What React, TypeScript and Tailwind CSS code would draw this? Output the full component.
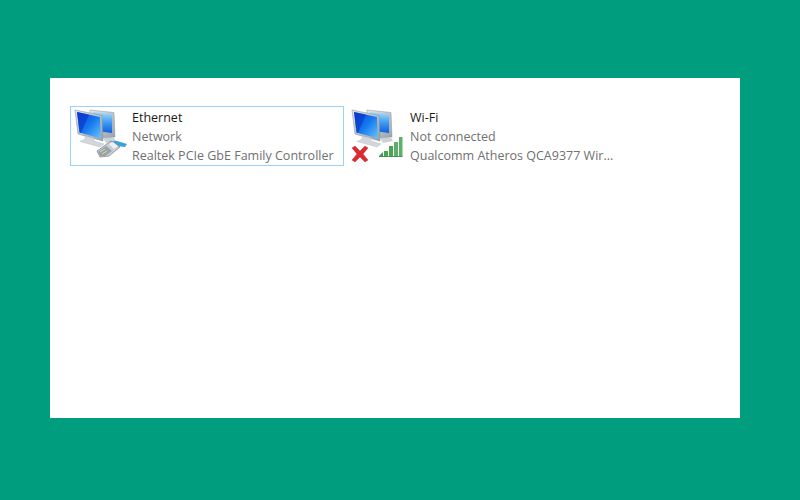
const font = "font-['Open_Sans','Noto_Sans',sans-serif]"

function Monitors() {
  return (
    <>
      <defs>
        <linearGradient id="scr" x1="0" y1="0" x2="1" y2="1">
          <stop offset="0" stopColor="#0a3fd8" />
          <stop offset="0.5" stopColor="#1478f0" />
          <stop offset="1" stopColor="#6cc4fa" />
        </linearGradient>
        <linearGradient id="scrBack" x1="0" y1="0" x2="0" y2="1">
          <stop offset="0" stopColor="#a6dcfb" />
          <stop offset="0.5" stopColor="#3f9cf2" />
          <stop offset="1" stopColor="#0f5fe0" />
        </linearGradient>
        <linearGradient id="body" x1="0" y1="0" x2="1" y2="1">
          <stop offset="0" stopColor="#e4e8ec" />
          <stop offset="1" stopColor="#98a2aa" />
        </linearGradient>
      </defs>
      {/* back monitor */}
      <path d="M17 2 L41 4.500 L42 29 L31 30 L17 20 Z" fill="url(#body)" stroke="#8d969e" strokeWidth="0.5" />
      <path d="M20 4 L39 6.500 L39 25 L24 23 Z" fill="url(#scrBack)" />
      <path d="M30 30 L41 30 L43 33 L33 35 Z" fill="#cdd2d6" />
      {/* front monitor */}
      <path d="M2 2 L29 7.500 L30 33 L5 26 Z" fill="url(#body)" stroke="#7f8890" strokeWidth="0.5" />
      <path d="M4 4 L27 9 L28 30.500 L6.500 24.500 Z" fill="url(#scr)" />
      <path d="M4 4 L16 6.600 L8 24.900 L6.500 24.500 Z" fill="#0a34c8" opacity="0.6" />
      <path d="M12 28 L21 30 L21 33 L31 36 L27 39 L7 33.500 L12 31 Z" fill="#d3d7db" stroke="#b0b6bb" strokeWidth="0.4" />
    </>
  )
}

function EthernetIcon() {
  return (
    <svg width="58" height="52" viewBox="0 0 58 52" className="shrink-0 blur-[0.4px]">
      <Monitors />
      {/* cable plug */}
      <path d="M39 33 L44 33 L54 36 L52 39 L44 38 Z" fill="#3f9fdc" />
      <path d="M24 43 L38 33 L47 39 L36 48 L27 49 Z" fill="#c7cdd3" stroke="#77818a" strokeWidth="0.7" />
      <path d="M25 44 L33 38 L39 43 L32 48 L27 48 Z" fill="#98a2aa" />
      <path d="M27 44 L32 41 M29 46 L34 43" stroke="#e6d592" strokeWidth="1" />
      <path d="M36 36 L40 34 L45 38 L41 41 Z" fill="#eef1f3" />
    </svg>
  )
}

function WifiIcon() {
  return (
    <svg width="58" height="54" viewBox="0 0 58 54" className="shrink-0 -translate-x-px blur-[0.4px]">
      <Monitors />
      {/* red x */}
      <path d="M2 40 L5 38 L10 43 L15 38 L18 40 L13 46 L18 52 L15 54 L10 49 L5 54 L2 52 L7 46 Z" fill="#dc2b30" stroke="#b5252a" strokeWidth="0.4" />
      {/* signal bars */}
      <path d="M29 48 L33 44 L33 48.500 L29 48.500 Z" fill="#3f9a4c" />
      <rect x="34" y="43" width="4" height="5.500" fill="#4aa457" />
      <rect x="39" y="38" width="4" height="10.500" fill="#4aa457" />
      <rect x="44" y="34" width="4" height="14.500" fill="#5bb168" />
      <rect x="49" y="29" width="3.500" height="19.500" fill="#5bb168" />
      <path d="M29 48.500 H52.500" stroke="#2f7f3c" strokeWidth="0.8" />
    </svg>
  )
}

function Adapter({ icon, name, status, device, selected }: { icon: React.ReactNode; name: string; status: string; device: string; selected?: boolean }) {
  return (
    <div className={`flex h-[60px] w-[274px] border ${selected ? "border-[#99d1ff]" : "border-transparent"}`}>
      <div className="ml-[2px] mt-[1px] h-[54px] w-[59px] shrink-0">{icon}</div>
      <div className="mt-[1px] whitespace-nowrap text-[12.5px] leading-[19px] text-[#707070]">
        <div className="text-[#1a1a1a]">{name}</div>
        <div>{status}</div>
        <div>{device}</div>
      </div>
    </div>
  )
}

export default function App() {
  return (
    <div className={`h-[500px] w-[800px] overflow-hidden bg-[#009e7e] pl-[50px] pt-[78px] ${font}`}>
      <div className="flex h-[340px] w-[690px] items-start gap-[4px] bg-white pl-[20px] pt-[28px]">
        <Adapter icon={<EthernetIcon />} name="Ethernet" status="Network" device="Realtek PCIe GbE Family Controller" selected />
        <Adapter icon={<WifiIcon />} name="Wi-Fi" status="Not connected" device="Qualcomm Atheros QCA9377 Wir..." />
      </div>
    </div>
  )
}
